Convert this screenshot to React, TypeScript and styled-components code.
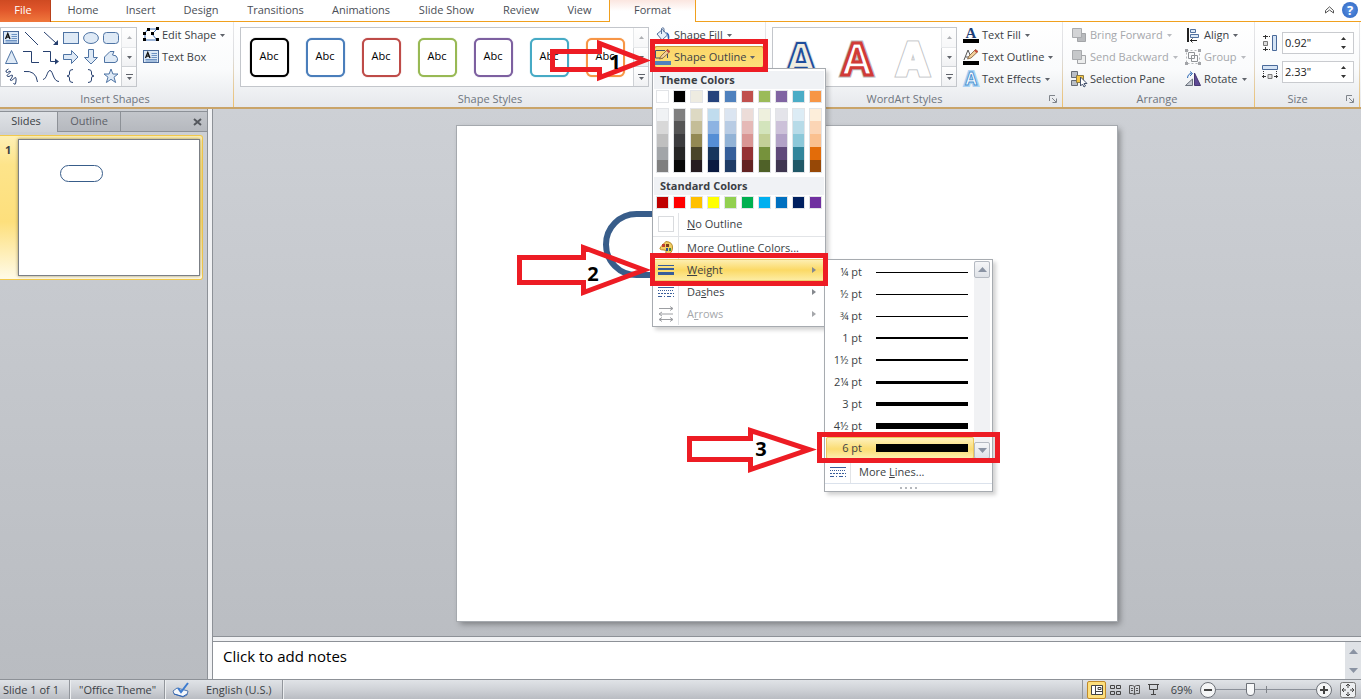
import React from "react";
import styled, { createGlobalStyle, css } from "styled-components";

const GlobalStyle = createGlobalStyle`
  * { box-sizing: border-box; }
  body { margin: 0; font: 11px/16px "Open Sans", "Noto Sans", sans-serif; color: #3b3f45; }
  button, input, textarea { font: inherit; color: inherit; }
  button { border: 0; padding: 0; background: none; text-align: left; white-space: nowrap; }
  ul { margin: 0; padding: 0; list-style: none; }
  svg { display: block; flex: none; overflow: visible; }
`;

const Window = styled.div`
  position: relative;
  min-height: 100vh;
  display: flex;
  flex-direction: column;
  background: #cdd0d5;
  overflow: hidden;
`;

/* ---------- tab bar ---------- */
const TabBar = styled.nav`
  display: flex;
  height: 22px;
  background: #fff;
  border-bottom: 1px solid #f0a01e;
`;
const FileTab = styled.button`
  width: 51px;
  height: 22px;
  padding: 0 4px 2px 0;
  text-align: center;
  color: #fff;
  border-right: 1px solid #b8401a;
  background: linear-gradient(#cf4a22, #e0562b 45%, #f0783c);
  margin-right: 3px;
`;
const Tab = styled.button<{ $w: number; $active?: boolean }>`
  width: ${(p) => p.$w}px;
  height: 21px;
  padding-bottom: 2px;
  text-align: center;
  color: #4a4e55;
  ${(p) =>
    p.$active &&
    css`
      margin-left: 3px;
      height: 22px;
      border: 1px solid #f0a01e;
      border-width: 0 1px;
      background: linear-gradient(#fbe6e0, #fff 50%);
    `}
`;
const TabTools = styled.div`
  margin-left: auto;
  display: flex;
  align-items: center;
  gap: 8px;
  padding: 0 3px 2px 0;
`;
const HelpButton = styled.button`
  width: 16px;
  height: 16px;
  border-radius: 50%;
  background: radial-gradient(#5b93e6, #2b62bd);
  color: #fff;
  font-weight: 700;
  font-size: 13px;
  text-align: center;
`;

/* ---------- ribbon ---------- */
const Ribbon = styled.div`
  position: relative;
  z-index: 2;
  display: flex;
  height: 87px;
  background: linear-gradient(#fff, #fafbfc 55%, #e6e8ec);
  border-bottom: 2px solid #c9a469;
`;
const Group = styled.section<{ $w: number }>`
  flex: none;
  width: ${(p) => p.$w}px;
  display: flex;
  flex-direction: column;
  border-right: 1px solid;
  border-image: linear-gradient(#e8e8ea, #dcdde0 40%, #eebf6a) 1;
`;
const GroupBody = styled.div<{ $pad?: number }>`
  flex: 1;
  display: flex;
  align-items: flex-start;
  padding: 2px 0 0 ${(p) => p.$pad ?? 0}px;
`;
const GroupLabel = styled.div<{ $launch?: boolean }>`
  position: relative;
  height: 16px;
  padding-right: ${(p) => (p.$launch ? 19 : 3)}px;
  text-align: center;
  color: #6f757e;
`;
const Launcher = styled.button`
  position: absolute;
  right: 5px;
  top: 4px;
`;
const Gallery = styled.div`
  display: flex;
  margin-top: 3px;
  height: 60px;
  border: 1px solid #c3c6cb;
  background: #fff;
`;
const ShapeGrid = styled.div`
  display: grid;
  grid-template-columns: repeat(6, 20px);
  grid-template-rows: repeat(3, 19px);
  justify-items: center;
  align-items: center;
`;
const ScrollColumn = styled.div`
  width: 15px;
  display: flex;
  flex-direction: column;
`;
const ScrollStep = styled.button<{ $dim?: boolean }>`
  flex: 1;
  display: grid;
  place-items: center;
  border-left: 1px solid #cfd2d6;
  border-bottom: 1px solid #cfd2d6;
  background: linear-gradient(#fff, #f0f1f3);
  opacity: ${(p) => (p.$dim ? 0.5 : 1)};
  &:last-child { border-bottom: 0; }
`;
const StyleCell = styled.button`
  width: 56px;
  height: 58px;
  display: grid;
  place-items: center;
`;
const StyleBox = styled.span<{ $c: string }>`
  width: 39px;
  height: 39px;
  border: 2px solid ${(p) => p.$c};
  border-radius: 6px;
  background: #fff;
  color: #000;
  text-align: center;
  line-height: 32px;
  box-shadow: 0 0 1px ${(p) => p.$c};
`;
const WordArtSample = styled.svg`
  font-family: "Open Sans", sans-serif;
  font-size: 44px;
  font-weight: 700;
  text-anchor: middle;
`;
const Commands = styled.div<{ $left: number; $w?: number }>`
  display: flex;
  flex-direction: column;
  margin-left: ${(p) => p.$left}px;
  ${(p) => p.$w && `width: ${p.$w}px;`}
`;
const CommandButton = styled.button<{ $off?: boolean; $open?: boolean }>`
  display: flex;
  align-items: center;
  gap: 3px;
  height: 22px;
  padding: 0 4px 0 1px;
  color: ${(p) => (p.$off ? "#a5a7ab" : "#3b3f45")};
  > span { margin-right: 1px; }
  ${(p) =>
    p.$open &&
    css`
      width: 110px;
      border-radius: 3px;
      background: linear-gradient(#fbd568, #fde07a);
      box-shadow: inset 0 0 0 1px #c79a3c;
    `}
`;
const Anchor = styled.div`
  position: relative;
`;
const SizeRow = styled.label`
  display: flex;
  align-items: center;
  gap: 4px;
  height: 22px;
  margin-bottom: 7px;
`;
const SizeBox = styled.span`
  display: flex;
  align-items: center;
  width: 72px;
  height: 22px;
  padding-right: 6px;
  border: 1px solid #c9cbcf;
  background: #fff;
`;
const SizeInput = styled.input`
  flex: 1;
  min-width: 0;
  border: 0;
  padding: 0 2px;
  background: none;
  color: #222;
  outline: 0;
`;
const SizeStack = styled.div`
  padding: 8px 0 0 7px;
`;

/* ---------- menus ---------- */
const Menu = styled.div`
  position: absolute;
  z-index: 5;
  top: 22px;
  left: -2px;
  width: 174px;
  padding: 2px 0 1px;
  border: 1px solid #a7abb0;
  background: #fff;
  box-shadow: 3px 3px 4px rgba(0, 0, 0, 0.18);
`;
const MenuHeading = styled.div`
  height: 18px;
  margin: 0 1px;
  padding-left: 6px;
  line-height: 18px;
  font-weight: 700;
  background: #f0f2f5;
`;
const SwatchRow = styled.div`
  display: flex;
  gap: 4px;
  padding: 1px 0 4px 3px;
`;
const SwatchColumn = styled.div`
  width: 13px;
  border: 1px solid #e2e4e7;
`;
const Swatch = styled.button<{ $c: string; $h: number }>`
  display: block;
  width: 100%;
  height: ${(p) => p.$h}px;
  background: ${(p) => p.$c};
`;
const MenuList = styled.ul`
  background: linear-gradient(90deg, transparent 25px, #e2e4e7 25px 26px, transparent 26px);
`;
const MenuItem = styled.li<{ $ruled?: boolean }>`
  position: relative;
  ${(p) => p.$ruled && "border-bottom: 1px solid #e2e4e7; padding-bottom: 1px;"}
`;
const MenuButton = styled.button<{ $off?: boolean; $hot?: boolean }>`
  display: flex;
  align-items: center;
  gap: 13px;
  width: 100%;
  height: 22px;
  padding: 0 9px 0 5px;
  color: ${(p) => (p.$off ? "#a5a7ab" : "#3b3f45")};
  svg:last-child:not(:first-child) { margin-left: auto; }
  ${(p) => p.$hot && "background: linear-gradient(#fdf0b8, #fbd965 50%, #fdeea8); box-shadow: inset 0 0 0 1px #f0cf6a;"}
`;
const EmptySwatch = styled.span`
  width: 16px;
  height: 16px;
  border: 1px solid #d9dbde;
`;
const SubMenu = styled.div`
  position: absolute;
  top: 0;
  left: calc(100% - 1px);
  width: 169px;
  border: 1px solid #a7abb0;
  background: #fff;
  box-shadow: 3px 3px 4px rgba(0, 0, 0, 0.18);
`;
const WeightArea = styled.div`
  display: flex;
  padding: 1px 2px 2px 1px;
`;
const WeightList = styled.ul`
  flex: 1;
`;
const WeightButton = styled.button<{ $hot?: boolean }>`
  display: flex;
  align-items: center;
  gap: 14px;
  width: 100%;
  height: 22px;
  padding-right: 6px;
  ${(p) => p.$hot && "background: linear-gradient(#fef3c4, #fbdc72 55%, #fdf0b4); box-shadow: inset 0 0 0 1px #eec85c; border-radius: 2px;"}
`;
const WeightName = styled.span`
  width: 36px;
  text-align: right;
`;
const WeightLine = styled.span<{ $h: number }>`
  flex: 1;
  height: ${(p) => p.$h}px;
  background: #000;
`;
const MenuScroll = styled.div`
  width: 16px;
  display: flex;
  flex-direction: column;
  justify-content: space-between;
  background: #f1f2f4;
`;
const MenuScrollButton = styled.button`
  height: 17px;
  display: grid;
  place-items: center;
  border: 1px solid #b5bac2;
  border-radius: 2px;
  background: linear-gradient(#f5f6f8, #dfe2e7);
`;
const Grip = styled.div`
  display: flex;
  justify-content: center;
  gap: 3px;
  height: 8px;
  padding-top: 3px;
  border-top: 1px solid #dbe2ec;
  span { width: 2px; height: 2px; background: #b5b8bd; }
`;

/* ---------- workspace ---------- */
const Workspace = styled.main`
  flex: 1;
  display: flex;
  min-height: 0;
  background: linear-gradient(#cdd0d5, #b9bcc1);
`;
const SlidesPane = styled.aside`
  width: 208px;
  padding-top: 2px;
  border-right: 1px solid #8d9197;
`;
const PaneTabs = styled.div`
  display: flex;
  height: 21px;
  border-top: 1px solid #8d9197;
  background: linear-gradient(#c3c6cb, #b5b8be);
`;
const PaneTab = styled.button<{ $w: number; $active?: boolean }>`
  width: ${(p) => p.$w}px;
  padding-bottom: 1px;
  text-align: center;
  border: 0 solid #8d9197;
  border-right-width: 1px;
  border-bottom-width: ${(p) => (p.$active ? 0 : 1)}px;
  color: ${(p) => (p.$active ? "#3b3f45" : "#5d6168")};
  ${(p) => p.$active && "background: linear-gradient(#dfe2e6, #d0d3d8); padding: 0 5px 2px 0;"}
`;
const PaneClose = styled.div`
  flex: 1;
  display: flex;
  align-items: center;
  justify-content: flex-end;
  padding-right: 5px;
  border-bottom: 1px solid #8d9197;
`;
const Thumb = styled.div`
  display: flex;
  margin: 3px 4px 0 0;
  padding: 3px 2px 3px 0;
  border: 1px solid #f2c94c;
  border-left: 0;
  border-radius: 0 3px 3px 0;
  background: linear-gradient(#fef0b5, #fde48a 20%, #fddf7c 60%, #fffbe8);
`;
const ThumbNumber = styled.span`
  width: 18px;
  padding: 3px 0 0 5px;
  font-weight: 700;
`;
const ThumbSlide = styled.div`
  position: relative;
  flex: 1;
  aspect-ratio: 4 / 3;
  border: 1px solid #7b7f85;
  background: #fff;
  box-shadow: 0 0 3px rgba(90, 80, 40, 0.6);
`;
const ThumbShape = styled.span`
  position: absolute;
  left: 41px;
  top: 25px;
  width: 43px;
  height: 17px;
  border: 1px solid #385d8a;
  border-radius: 9px;
`;
const Divider = styled.div`
  width: 5px;
  background: #f1f2f4;
  border-right: 1px solid #8d9197;
`;
const Editor = styled.div`
  flex: 1;
  min-width: 0;
  display: flex;
  flex-direction: column;
`;
const Stage = styled.div`
  flex: 1;
  min-height: 320px;
  display: flex;
  align-items: center;
  justify-content: center;
  padding: 17px 0 15px;
`;
const Slide = styled.div`
  position: relative;
  height: 100%;
  aspect-ratio: 4 / 3;
  background: #fff;
  box-shadow: 0 0 0 1px #a5a9ae, 3px 3px 6px rgba(0, 0, 0, 0.35);
`;
const SlideShape = styled.div`
  position: absolute;
  left: 146px;
  top: 85px;
  width: 160px;
  height: 67px;
  border: 6px solid #385d8a;
  border-radius: 34px;
`;
const NotesRow = styled.div`
  display: flex;
  height: 43px;
  border-top: 1px solid #8d9197;
`;
const NotesFrame = styled.div`
  flex: 1;
  display: flex;
  border-top: 4px solid #f1f2f4;
`;
const Notes = styled.textarea`
  flex: 1;
  resize: none;
  border: 0;
  border-top: 1px solid #8d9197;
  outline: 0;
  padding: 3px 10px;
  overflow: hidden;
  background: #fff;
  color: #000;
  font-size: 15px;
  line-height: 22px;
  &::placeholder { color: #000; opacity: 1; }
`;
const NotesScroll = styled.div`
  width: 16px;
  display: flex;
  flex-direction: column;
  justify-content: space-between;
  align-items: center;
  padding: 7px 0 6px;
  border-top: 1px solid #8d9197;
  background: #dfe2e6;
`;

/* ---------- status bar ---------- */
const StatusBar = styled.footer`
  display: flex;
  align-items: center;
  height: 20px;
  border-top: 1px solid #8d9197;
  background: linear-gradient(#e0e3e7, #cfd2d7 50%, #b9bcc2);
`;
const StatusItem = styled.div<{ $w: number; $pad: number }>`
  display: flex;
  align-items: center;
  gap: 17px;
  width: ${(p) => p.$w}px;
  height: 19px;
  padding-left: ${(p) => p.$pad}px;
  white-space: nowrap;
  border-right: 1px solid #92969c;
  box-shadow: 1px 0 #eceef0;
`;
const StatusTools = styled.div`
  margin-left: auto;
  display: flex;
  align-items: center;
  height: 19px;
  padding: 0 5px 0 4px;
  border-left: 1px solid #92969c;
`;
const ViewButton = styled.button<{ $active?: boolean }>`
  width: 19px;
  height: 18px;
  display: grid;
  place-items: center;
  ${(p) => p.$active && "background: #fddf7c; border: 1px solid #c08a2a; border-radius: 2px;"}
`;
const ZoomText = styled.button`
  width: 37px;
  text-align: center;
`;
const RoundButton = styled.button`
  width: 16px;
  height: 16px;
  display: grid;
  place-items: center;
  border: 1px solid #6d7178;
  border-radius: 50%;
  background: #f4f5f6;
`;
const ZoomSlider = styled.input`
  appearance: none;
  width: 100px;
  height: 16px;
  margin: 0;
  background:
    linear-gradient(#7f8389, #7f8389) 50px 50% / 1px 7px no-repeat,
    linear-gradient(#8b9099, #8b9099) 0 50% / 100% 1px no-repeat;
  &::-webkit-slider-thumb {
    appearance: none;
    width: 9px;
    height: 13px;
    border: 1px solid #6d7178;
    border-radius: 1px 1px 5px 5px;
    background: #f8f9fa;
  }
`;
const FitButton = styled.button`
  margin-left: 8px;
`;

/* ---------- annotations ---------- */
const Marks = styled.svg`
  position: absolute;
  z-index: 10;
  left: 0;
  top: 0;
  width: 1010px;
  height: 480px;
  pointer-events: none;
`;

/* ---------- icons ---------- */
const Icon = ({ w = 16, h = 16, children }: { w?: number; h?: number; children: React.ReactNode }) => (
  <svg width={w} height={h} viewBox={`0 0 ${w} ${h}`} fill="none" aria-hidden="true">
    {children}
  </svg>
);
const Caret = ({ c = "#5f636a", up = false }) => (
  <svg width="5" height="3" viewBox="0 0 5 3" aria-hidden="true">
    <path d={up ? "M0 3h5L2.5 0z" : "M0 0h5L2.5 3z"} fill={c} />
  </svg>
);
const BigCaret = ({ up = false }) => (
  <svg width="9" height="5" viewBox="0 0 9 5" aria-hidden="true">
    <path d={up ? "M0 5h9L4.500 0z" : "M0 0h9L4.500 5z"} fill="#8a93a3" />
  </svg>
);
const RightCaret = ({ c = "#85888e" }) => (
  <svg width="4" height="6" viewBox="0 0 4 6" aria-hidden="true">
    <path d="M0 0v6l4-3z" fill={c} />
  </svg>
);
const TextBoxIcon = () => (
  <Icon>
    <rect x=".5" y="1.500" width="15" height="12" fill="#dbe8f6" stroke="#4a6a9a" />
    <path d="M2.500 9 4.800 3.500 7 9M3.200 7.200h3" stroke="#111" strokeWidth="1.300" />
    <path d="M8.500 4.500H14M8.500 6.500H14M8.500 8.500H14M2.500 10.500H14M2.500 12H14" stroke="#6d93c4" />
  </Icon>
);
const ink = "#27406f";
const edge = "#4f74a4";
const tint = "#dfeaf6";
const shapeIcons: React.ReactNode[] = [
  <TextBoxIcon />,
  <Icon><path d="M2 2 15 15" stroke={ink} /></Icon>,
  <Icon><path d="M1 2 13 13" stroke={ink} /><path d="M15 15v-5l-5 5z" fill={ink} /></Icon>,
  <Icon><rect x=".5" y="2.500" width="15" height="11" fill={tint} stroke={edge} /></Icon>,
  <Icon><ellipse cx="8" cy="8" rx="7.400" ry="5.500" fill={tint} stroke={edge} /></Icon>,
  <Icon><rect x=".5" y="2.500" width="15" height="11" rx="3" fill={tint} stroke={edge} /></Icon>,
  <Icon><path d="M8.500 1.500 14.500 14.500H2.500z" fill={tint} stroke={edge} /></Icon>,
  <Icon><path d="M0 2.500H8.500V13.500H16" stroke={ink} /></Icon>,
  <Icon><path d="M0 2.500H7.500V12.500H13" stroke={ink} /><path d="M12 9.500v6l4-3z" fill={ink} /></Icon>,
  <Icon><path d="M.5 5.500H8.500V1.500L15 8 8.500 14.500V10.500H.5z" fill={tint} stroke={edge} /></Icon>,
  <Icon><path d="M5.500.5V8.500H1.500L8 15 14.500 8.500H10.500V.5z" fill={tint} stroke={edge} /></Icon>,
  <Icon><path d="M1.500 13.500V8L7 2.500H11L9.500 6Q14 6 14.500 9.500T12 13.500z" fill={tint} stroke={edge} /></Icon>,
  <Icon><path d="M5.500 1Q2 2.500 3 4T7 3Q9 3.500 5.500 6T6 8.500Q10 6 9.500 8T7 12Q8.500 13.500 11 10.500T13 13 10.500 15" stroke={ink} /></Icon>,
  <Icon><path d="M1 3.500Q13 2 14.500 14" stroke={ink} /></Icon>,
  <Icon><path d="M0 11.500C4 11 4 2.500 7 2.500S10 13.500 16 13.500" stroke={ink} /></Icon>,
  <Icon><path d="M10 1.500Q6.500 1.500 6.500 4V6Q6.500 8 4 8 6.500 8 6.500 10V12Q6.500 14.500 10 14.500" stroke={ink} /></Icon>,
  <Icon><path d="M5 1.500Q8.500 1.500 8.500 4V6Q8.500 8 11 8 8.500 8 8.500 10V12Q8.500 14.500 5 14.500" stroke={ink} /></Icon>,
  <Icon><path d="M8 1 9.900 6H15L11 9.200 12.600 14.500 8 11.300 3.400 14.500 5 9.200 1 6H6.100z" fill={tint} stroke={edge} /></Icon>,
];
const EditShapeIcon = () => (
  <Icon>
    <path d="M2 12V6L5 2 14 2 9 7 14 13H2" stroke="#3f6eb5" />
    <path d="M4 1h3v3H4zM13 0h3v3h-3zM8 5h3v3H8zM0 5h3v3H0zM0 11h3v3H0zM13 11h3v3h-3z" fill="#000" />
  </Icon>
);
const FillIcon = () => (
  <Icon>
    <path d="M2 7 7.500 2.500 12.500 8 7 13z" fill="#e6f0fa" stroke="#54709a" />
    <path d="M6.500 7V1.500Q8 0 9 1.500V5" stroke="#54709a" />
    <path d="M11 5Q15.500 6 14 13 12.500 13 12.500 8z" fill="#2f64b5" />
  </Icon>
);
const PenOutlineIcon = ({ bar = "#4f81bd", text = false }) => (
  <Icon>
    {text ? <path d="M1 11 5 1 7.500 7M2.500 8H6" stroke="#555" /> : <path d="M10 1.500H.5V9H8M12.500 5V9" stroke="#41506b" />}
    <path d="M4.500 10 6 7 12.500.5 15 2.500 8 9z" fill="#f2cf9a" stroke="#7c5a35" strokeWidth=".8" />
    <path d="M12.500.5 15 2.500 13.500 4 11.200 1.800z" fill="#c9483a" />
    <path d="M0 12h16v4H0z" fill={bar} />
  </Icon>
);
const TextFillIcon = () => (
  <Icon>
    <text x="8" y="11" fontSize="15" fontFamily="Liberation Serif" fontWeight="700" textAnchor="middle" fill="#1f3f77">A</text>
    <path d="M0 12h16v4H0z" fill="#000" />
  </Icon>
);
const TextEffectsIcon = () => (
  <Icon>
    <text x="8" y="14" fontSize="17" fontFamily="Open Sans" fontWeight="700" textAnchor="middle" fill="#fff" stroke="#a9d2f3" strokeWidth="4" paintOrder="stroke">A</text>
    <text x="8" y="14" fontSize="17" fontFamily="Open Sans" fontWeight="700" textAnchor="middle" fill="#fff" stroke="#4d94d2">A</text>
  </Icon>
);
const LayerIcon = ({ back = false }) => (
  <Icon>
    <path d="M6.500 6.500h8v8h-8z" fill={back ? "#eceded" : "#b9bbbe"} stroke="#a3a5a8" />
    <path d="M1.500 1.500h9v9h-9z" fill={back ? "#c6c8ca" : "#d3d4d6"} stroke="#a9abae" />
  </Icon>
);
const PaneIcon = () => (
  <Icon>
    <path d="M.5.5h6v6h-6zM.5 9.500h6v5h-6z" fill="#b9bec6" stroke="#666c75" />
    <path d="M5.500 4.500h7v7h-7z" fill="#f5c644" stroke="#8b7a45" />
    <path d="M9.500 6v9l2-2 1.500 3 1.500-1-1.500-2.500h3z" fill="#fff" stroke="#44526d" />
  </Icon>
);
const AlignIcon = () => (
  <Icon>
    <path d="M2 1h2v14H2z" fill="#222" />
    <path d="M5.500 2.500h5v3h-5zM5.500 7.500h8v3h-8z" fill="#dbe8f6" stroke="#51719f" />
    <path d="M5 13.500h7M7.500 11.500l-2 2 2 2" stroke="#222" />
  </Icon>
);
const GroupIcon = () => (
  <Icon>
    <path d="M1.500 1.500h13v13h-13z" stroke="#b6b8bb" strokeDasharray="2 2" />
    <path d="M3.500 3.500h6v6h-6zM6.500 6.500h6v6h-6z" stroke="#8f9296" />
    <path d="M0 0h3v3H0zM13 0h3v3h-3zM0 13h3v3H0zM13 13h3v3h-3z" fill="#a1a3a7" />
  </Icon>
);
const RotateIcon = () => (
  <Icon>
    <path d="M.5 14.500 7.500 8V14.500z" fill="#c7ccd4" stroke="#6a717c" />
    <path d="M9.500 2v12.500H15.500z" fill="#5e4a94" stroke="#473872" />
    <path d="M2.500 7Q3 2.500 6.500 2.500M5 .5l2.500 2L5 5" stroke="#2c69b5" />
  </Icon>
);
const HeightIcon = () => (
  <Icon>
    <path d="M10.500.5h4v15h-4z" fill="#d5e4f5" stroke="#4a6a9a" />
    <path d="M1.500 6.500h4v4h-4z" fill="#ddd" stroke="#777" />
    <path d="M1 1.500h8M1 14.500h8" stroke="#333" strokeDasharray="1 1" />
    <path d="M3.500 0v4M3.500 12v4M2 1.500h3M2 14.500h3" stroke="#333" />
  </Icon>
);
const WidthIcon = () => (
  <Icon>
    <path d="M.5 1.500h15v4H.5z" fill="#d5e4f5" stroke="#4a6a9a" />
    <path d="M6 10.500h4v4H6z" fill="#ddd" stroke="#777" />
    <path d="M1.500 7v8M14.500 7v8" stroke="#333" strokeDasharray="1 1" />
    <path d="M0 12.500h4M12 12.500h4M1.500 11v3M14.500 11v3" stroke="#333" />
  </Icon>
);
const PaletteIcon = () => (
  <Icon>
    <path d="M8 1.500Q15 2 14.500 8T9 14.500Q7 14 8 12T6 10 2 9 8 1.500" fill="#f3cd62" stroke="#b58a2b" />
    <path d="M4 4h3v3H4z" fill="#c2402e" /><path d="M8 4h3v3H8z" fill="#7a3f1e" />
    <path d="M8 8h2v3H8z" fill="#2b4f9a" /><path d="M11 8h2v3h-2z" fill="#3f8a3d" />
  </Icon>
);
const WeightIcon = () => (
  <Icon><path d="M0 3.500h16" stroke="#385d9a" /><path d="M0 7h16" stroke="#385d9a" strokeWidth="2" /><path d="M0 11.500h16" stroke="#385d9a" strokeWidth="3" /></Icon>
);
const DashIcon = () => (
  <Icon>
    <path d="M0 3.500h16" stroke="#385d9a" />
    <path d="M0 6.500h16" stroke="#385d9a" strokeDasharray="1 1" />
    <path d="M0 9.500h16" stroke="#385d9a" strokeDasharray="2 1" />
    <path d="M0 12.500h16" stroke="#385d9a" strokeDasharray="4 2 1 2" />
  </Icon>
);
const ArrowsIcon = () => (
  <Icon><path d="M1 2.500h14M12 .5l3 2-3 2M1 8h14M4 6 1 8l3 2M1 13.500h14M4 11.500l-3 2 3 2M12 11.500l3 2-3 2" stroke="#9c9ea2" /></Icon>
);
const LauncherIcon = () => (
  <Icon w={8} h={8}><path d="M.5 6V.5H6M3 3l4 4M7.500 3.500v4h-4" stroke="#7f848b" /></Icon>
);

/* ---------- data ---------- */
const tabs: [string, number][] = [
  ["Home", 58], ["Insert", 57], ["Design", 64], ["Transitions", 85],
  ["Animations", 86], ["Slide Show", 85], ["Review", 64], ["View", 53],
];
const styleColors = ["#000000", "#4a7ebb", "#be4b48", "#98b954", "#7d60a0", "#46aac5", "#f79646"];
const themeColors = ["#ffffff", "#000000", "#eeece1", "#25427c", "#4f81bd", "#c0504d", "#9bbb59", "#8064a2", "#4bacc6", "#f79646"];
const shades = [
  ["#f0f2f4", "#d8d8d8", "#bfbfbf", "#a2a5a8", "#7f7f7f"],
  ["#7f7f7f", "#555555", "#3c3c3e", "#262626", "#080808"],
  ["#ddd9c3", "#c4bd97", "#938953", "#494429", "#261c20"],
  ["#c0dcee", "#8db3e2", "#558ed5", "#17365d", "#0a1a40"],
  ["#dbe5f1", "#b8cce4", "#92b3d6", "#365f9a", "#1f3c66"],
  ["#ecdcd8", "#e5b9b7", "#d99694", "#953234", "#632423"],
  ["#eef0dd", "#d3e4bc", "#c3d097", "#76923c", "#4f6128"],
  ["#e4e4ea", "#ccc1d9", "#b2a2c7", "#5f497a", "#3f3650"],
  ["#dcecf5", "#b7dbe8", "#8cc8d9", "#31859b", "#205867"],
  ["#fdeeda", "#fbd5b5", "#fac08f", "#e36c09", "#974806"],
];
const standardColors = ["#c00000", "#ff0000", "#ffc000", "#ffff00", "#92d050", "#00b050", "#00b0f0", "#0070c0", "#002060", "#7030a0"];
const weights: [string, number][] = [
  ["¼ pt", 1], ["½ pt", 1], ["¾ pt", 1], ["1 pt", 2], ["1½ pt", 2],
  ["2¼ pt", 3], ["3 pt", 4], ["4½ pt", 6], ["6 pt", 8],
];

/* ---------- composite parts ---------- */
const GalleryScroll = () => (
  <ScrollColumn>
    <ScrollStep $dim aria-label="Previous row"><Caret up /></ScrollStep>
    <ScrollStep aria-label="Next row"><Caret /></ScrollStep>
    <ScrollStep aria-label="More">
      <Icon w={7} h={6}><path d="M0 .5h7" stroke="#5f636a" /><path d="M1 3h5L3.500 6z" fill="#5f636a" /></Icon>
    </ScrollStep>
  </ScrollColumn>
);

type CommandProps = { icon: React.ReactNode; label: string; off?: boolean; open?: boolean; plain?: boolean };
const Command = ({ icon, label, off, open, plain }: CommandProps) => (
  <CommandButton $off={off} $open={open} disabled={off}>
    {icon}
    <span>{label}</span>
    {!plain && <Caret c={off ? "#b9bbbf" : "#5f636a"} />}
  </CommandButton>
);

const WordArtPreview = ({ line, width, fill, halo }: { line: string; width: number; fill: string; halo: string }) => (
  <StyleCell aria-label="WordArt style">
    <WordArtSample width="50" height="50" viewBox="0 0 50 50" aria-hidden="true">
      <text x="25" y="43" fill={halo} stroke={halo} strokeWidth={width + 2}>A</text>
      <text x="25" y="43" fill={fill} stroke={line} strokeWidth={width}>A</text>
    </WordArtSample>
  </StyleCell>
);

const WeightMenu = () => (
  <SubMenu>
    <WeightArea>
      <WeightList>
        {weights.map(([name, h]) => (
          <li key={name}>
            <WeightButton $hot={name === "6 pt"}>
              <WeightName>{name}</WeightName>
              <WeightLine $h={h} />
            </WeightButton>
          </li>
        ))}
      </WeightList>
      <MenuScroll>
        <MenuScrollButton aria-label="Scroll up"><BigCaret up /></MenuScrollButton>
        <MenuScrollButton aria-label="Scroll down"><BigCaret /></MenuScrollButton>
      </MenuScroll>
    </WeightArea>
    <MenuList>
      <MenuItem><MenuButton><DashIcon /><span>More <u>L</u>ines...</span></MenuButton></MenuItem>
    </MenuList>
    <Grip><span /><span /><span /><span /></Grip>
  </SubMenu>
);

const OutlineMenu = () => (
  <Menu>
    <MenuHeading>Theme Colors</MenuHeading>
    <SwatchRow>
      {themeColors.map((c) => <SwatchColumn key={c}><Swatch $c={c} $h={11} aria-label={c} /></SwatchColumn>)}
    </SwatchRow>
    <SwatchRow>
      {shades.map((col, i) => (
        <SwatchColumn key={i}>
          {col.map((c, j) => <Swatch key={j} $c={c} $h={j === 0 || j === 4 ? 12 : 13} aria-label={c} />)}
        </SwatchColumn>
      ))}
    </SwatchRow>
    <MenuHeading>Standard Colors</MenuHeading>
    <SwatchRow>
      {standardColors.map((c) => <SwatchColumn key={c}><Swatch $c={c} $h={11} aria-label={c} /></SwatchColumn>)}
    </SwatchRow>
    <MenuList>
      <MenuItem $ruled><MenuButton><EmptySwatch /><span><u>N</u>o Outline</span></MenuButton></MenuItem>
      <MenuItem><MenuButton><PaletteIcon /><span><u>M</u>ore Outline Colors...</span></MenuButton></MenuItem>
      <MenuItem>
        <MenuButton $hot><WeightIcon /><span><u>W</u>eight</span><RightCaret /></MenuButton>
        <WeightMenu />
      </MenuItem>
      <MenuItem><MenuButton><DashIcon /><span>Da<u>s</u>hes</span><RightCaret /></MenuButton></MenuItem>
      <MenuItem><MenuButton $off><ArrowsIcon /><span>A<u>r</u>rows</span><RightCaret c="#a5a7ab" /></MenuButton></MenuItem>
    </MenuList>
  </Menu>
);

const SizeField = ({ label, value, icon }: { label: string; value: string; icon: React.ReactNode }) => (
  <SizeRow>
    {icon}
    <SizeBox>
      <SizeInput aria-label={label} defaultValue={value} />
      <Icon w={7} h={14}><path d="M1 4h5L3.500 1zM1 10h5L3.500 13z" fill="#333" /></Icon>
    </SizeBox>
  </SizeRow>
);

const Annotations = () => (
  <Marks viewBox="0 0 1010 480" fill="none" stroke="#ed1c24" strokeWidth="5" aria-hidden="true">
    <rect x="652.500" y="41.500" width="113" height="28" />
    <rect x="652.500" y="255.500" width="173" height="28" />
    <rect x="819.500" y="434.500" width="178" height="26" />
    <path d="M552.500 51.500H599.500V43.500L644 60.500 599.500 77.500V69.500H552.500z" />
    <path d="M519.500 257.500H583.500V247.500L644 270 583.500 292.500V282.500H519.500z" />
    <path d="M689.500 438.500H750.500V430.500L809 449.500 750.500 469.500V459.500H689.500z" />
    <g fill="#000" stroke="none" fontFamily="Open Sans" fontWeight="700" fontSize="20" textAnchor="middle">
      <text x="615" y="69">1</text>
      <text x="593" y="281">2</text>
      <text x="761" y="456">3</text>
    </g>
  </Marks>
);

export default function App() {
  return (
    <Window>
      <GlobalStyle />
      <TabBar>
        <FileTab>File</FileTab>
        {tabs.map(([name, w]) => <Tab key={name} $w={w}>{name}</Tab>)}
        <Tab $w={87} $active>Format</Tab>
        <TabTools>
          <Icon w={9} h={8}><path d="M.5 4.500 4.500.8 8.500 4.500V7L4.500 4 .5 7z" stroke="#555" /></Icon>
          <HelpButton aria-label="Help">?</HelpButton>
        </TabTools>
      </TabBar>

      <Ribbon>
        <Group $w={234}>
          <GroupBody>
            <Gallery>
              <ShapeGrid>{shapeIcons.map((s, i) => <React.Fragment key={i}>{s}</React.Fragment>)}</ShapeGrid>
              <GalleryScroll />
            </Gallery>
            <Commands $left={5}>
              <Command icon={<EditShapeIcon />} label="Edit Shape" />
              <Command icon={<TextBoxIcon />} label="Text Box" plain />
            </Commands>
          </GroupBody>
          <GroupLabel>Insert Shapes</GroupLabel>
        </Group>

        <Group $w={532}>
          <GroupBody $pad={6}>
            <Gallery>
              {styleColors.map((c) => <StyleCell key={c}><StyleBox $c={c}>Abc</StyleBox></StyleCell>)}
              <GalleryScroll />
            </Gallery>
            <Commands $left={5}>
              <Command icon={<FillIcon />} label="Shape Fill" />
              <Anchor>
                <Command icon={<PenOutlineIcon />} label="Shape Outline" open />
                <OutlineMenu />
              </Anchor>
            </Commands>
          </GroupBody>
          <GroupLabel $launch>Shape Styles<Launcher aria-label="Shape options"><LauncherIcon /></Launcher></GroupLabel>
        </Group>

        <Group $w={297}>
          <GroupBody $pad={6}>
            <Gallery>
              <WordArtPreview line="#1f4e9c" width={2} fill="#f0ede0" halo="#dfe2e6" />
              <WordArtPreview line="#d13b37" width={3} fill="#ffffff" halo="#b9babd" />
              <WordArtPreview line="#ffffff" width={3} fill="#ffffff" halo="#c3c5c8" />
              <GalleryScroll />
            </Gallery>
            <Commands $left={5}>
              <Command icon={<TextFillIcon />} label="Text Fill" />
              <Command icon={<PenOutlineIcon bar="#000" text />} label="Text Outline" />
              <Command icon={<TextEffectsIcon />} label="Text Effects" />
            </Commands>
          </GroupBody>
          <GroupLabel $launch>WordArt Styles<Launcher aria-label="WordArt options"><LauncherIcon /></Launcher></GroupLabel>
        </Group>

        <Group $w={192}>
          <GroupBody>
            <Commands $left={7} $w={114}>
              <Command icon={<LayerIcon />} label="Bring Forward" off />
              <Command icon={<LayerIcon back />} label="Send Backward" off />
              <Command icon={<PaneIcon />} label="Selection Pane" plain />
            </Commands>
            <Commands $left={0}>
              <Command icon={<AlignIcon />} label="Align" />
              <Command icon={<GroupIcon />} label="Group" off />
              <Command icon={<RotateIcon />} label="Rotate" />
            </Commands>
          </GroupBody>
          <GroupLabel>Arrange</GroupLabel>
        </Group>

        <Group $w={105}>
          <GroupBody>
            <SizeStack>
              <SizeField label="Shape height" value={'0.92"'} icon={<HeightIcon />} />
              <SizeField label="Shape width" value={'2.33"'} icon={<WidthIcon />} />
            </SizeStack>
          </GroupBody>
          <GroupLabel $launch>Size<Launcher aria-label="Size options"><LauncherIcon /></Launcher></GroupLabel>
        </Group>
      </Ribbon>

      <Workspace>
        <SlidesPane>
          <PaneTabs>
            <PaneTab $w={58} $active>Slides</PaneTab>
            <PaneTab $w={63}>Outline</PaneTab>
            <PaneClose>
              <button aria-label="Close pane">
                <Icon w={9} h={8}><path d="M1 1l7 6M8 1 1 7" stroke="#55585e" strokeWidth="2" /></Icon>
              </button>
            </PaneClose>
          </PaneTabs>
          <Thumb>
            <ThumbNumber>1</ThumbNumber>
            <ThumbSlide><ThumbShape /></ThumbSlide>
          </Thumb>
        </SlidesPane>
        <Divider />
        <Editor>
          <Stage>
            <Slide><SlideShape /></Slide>
          </Stage>
          <NotesRow>
            <NotesFrame>
              <Notes aria-label="Notes" placeholder="Click to add notes" />
              <NotesScroll><BigCaret up /><BigCaret /></NotesScroll>
            </NotesFrame>
          </NotesRow>
        </Editor>
      </Workspace>

      <StatusBar>
        <StatusItem $w={70} $pad={3}>Slide 1 of 1</StatusItem>
        <StatusItem $w={95} $pad={9}>"Office Theme"</StatusItem>
        <StatusItem $w={118} $pad={8}>
          <Icon>
            <path d="M0 9 4 6 15 9 14 13 10 15 1 12z" fill="#f4f7fb" stroke="#5378ad" />
            <path d="M1 12 10 14.500 14 12" stroke="#2f64b5" />
            <path d="M5 6 8 10 15 1" stroke="#3c7bd0" strokeWidth="2" />
          </Icon>
          English (U.S.)
        </StatusItem>
        <StatusTools>
          <ViewButton $active aria-label="Normal view">
            <Icon w={12} h={10}><path d="M.5.5h11v9H.5z" fill="#fff" stroke="#444" /><path d="M4.500.5v9M4.500 6.500h7M7 2.500h3v2H7z" stroke="#444" /></Icon>
          </ViewButton>
          <ViewButton aria-label="Slide sorter">
            <Icon w={11} h={10}><path d="M.5.5h4v3h-4zM6.500.5h4v3h-4zM.5 6.500h4v3h-4zM6.500 6.500h4v3h-4z" stroke="#444" /></Icon>
          </ViewButton>
          <ViewButton aria-label="Reading view">
            <Icon w={11} h={10}><path d="M.5.5h3l2 1 2-1h3v8h-3l-2 1-2-1h-3zM5.500 1.500v8M2 3.500h2M2 5.500h2M7 3.500h2M7 5.500h2" stroke="#555" /></Icon>
          </ViewButton>
          <ViewButton aria-label="Slide show">
            <Icon w={11} h={11}><path d="M0 .5h11M1.500 1v4.500h8V1M5.500 6v4M3 10.500h5" stroke="#444" /></Icon>
          </ViewButton>
          <ZoomText>69%</ZoomText>
          <RoundButton aria-label="Zoom out"><Icon w={8} h={8}><path d="M0 4h8" stroke="#444" strokeWidth="2" /></Icon></RoundButton>
          <ZoomSlider type="range" min={0} max={100} defaultValue={33} aria-label="Zoom" />
          <RoundButton aria-label="Zoom in"><Icon w={8} h={8}><path d="M0 4h8M4 0v8" stroke="#444" strokeWidth="2" /></Icon></RoundButton>
          <FitButton aria-label="Fit slide to window">
            <Icon>
              <rect x=".5" y=".5" width="15" height="15" rx="2" fill="#eceef0" stroke="#777" />
              <path d="M8 2v4M6 4l2-2 2 2M8 14v-4M6 12l2 2 2-2M2 8h4M4 6 2 8l2 2M14 8h-4M12 6l2 2-2 2" stroke="#444" />
            </Icon>
          </FitButton>
        </StatusTools>
      </StatusBar>
      <Annotations />
    </Window>
  );
}
